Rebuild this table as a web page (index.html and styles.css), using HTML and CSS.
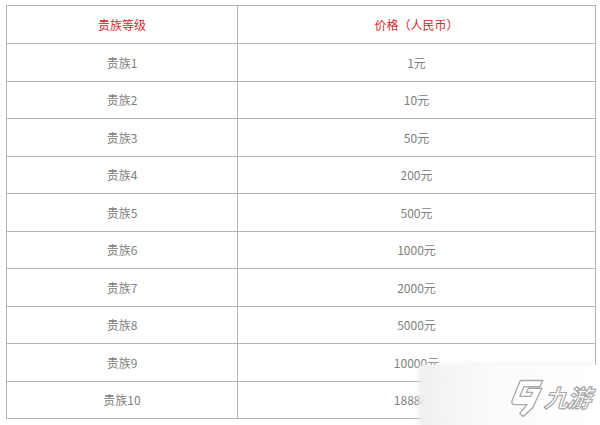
FILE: index.html
```
<!DOCTYPE html>
<html lang="zh-CN">
<head>
<meta charset="utf-8">
<link rel="stylesheet" href="styles.css">
</head>
<body>
<table class="price-table">
  <thead>
    <tr><th class="col-level">贵族等级</th><th class="col-price">价格（人民币）</th></tr>
  </thead>
  <tbody>
    <tr><td>贵族1</td><td>1元</td></tr>
    <tr><td>贵族2</td><td>10元</td></tr>
    <tr><td>贵族3</td><td>50元</td></tr>
    <tr><td>贵族4</td><td>200元</td></tr>
    <tr><td>贵族5</td><td>500元</td></tr>
    <tr><td>贵族6</td><td>1000元</td></tr>
    <tr><td>贵族7</td><td>2000元</td></tr>
    <tr><td>贵族8</td><td>5000元</td></tr>
    <tr><td>贵族9</td><td>10000元</td></tr>
    <tr><td>贵族10</td><td>18888元</td></tr>
  </tbody>
</table>
<div class="watermark">
  <svg class="wm-mark" width="35" height="39" viewBox="0 0 34 38">
    <path d="M10,1.5 L32,1.5 L29,7.5 L13.5,7.5 L9.5,17 L20,17 L22,13 L16,13 L18,9 L31,9 L22,28 L13,36.5 L9.5,33.5 L16.5,25 L4.5,25 Q1,25 2,21 Z" fill="#fff" stroke="#a8a8a8" stroke-width="1.3" stroke-linejoin="round"/>
  </svg>
  <span class="wm-text">九游</span>
</div>
</body>
</html>
```
FILE: styles.css
```
html, body {
  margin: 0;
  padding: 0;
  background: #fff;
  overflow: hidden;
}
body {
  padding: 5px 0 0 6px;
  font-family: "Noto Sans CJK SC", "Noto Sans", sans-serif;
}
.price-table {
  border-collapse: collapse;
  width: 590px;
  border: 1.5px solid #444;
  font-size: 12px;
}
.price-table th,
.price-table td {
  border: 1px solid #b4b4b4;
  height: 36.5px;
  padding: 0;
  text-align: center;
  vertical-align: middle;
  color: #808080;
  font-weight: normal;
}
.price-table th {
  color: #d8262c;
  height: 37px;
}
.col-level {
  width: 230px;
}
.watermark {
  position: absolute;
  left: 422px;
  top: 365px;
  width: 178px;
  height: 60px;
  background: linear-gradient(to right, rgba(240,240,240,0.97), rgba(250,250,250,0.99) 35%, #fff);
  box-shadow: -3px 0 6px rgba(235,235,235,0.9);
  display: flex;
  align-items: center;
  padding-left: 88px;
  box-sizing: border-box;
}
.wm-mark {
  flex: none;
  margin-top: 6px;
}
.wm-text {
  flex: none;
  font-family: "Noto Sans CJK SC", sans-serif;
  font-size: 24px;
  font-weight: bold;
  line-height: 1;
  color: #fff;
  -webkit-text-stroke: 1.2px #a8a8a8;
  transform: skewX(-18deg);
  letter-spacing: -1px;
  margin-left: 2px;
  margin-top: 4px;
  white-space: nowrap;
}
```
